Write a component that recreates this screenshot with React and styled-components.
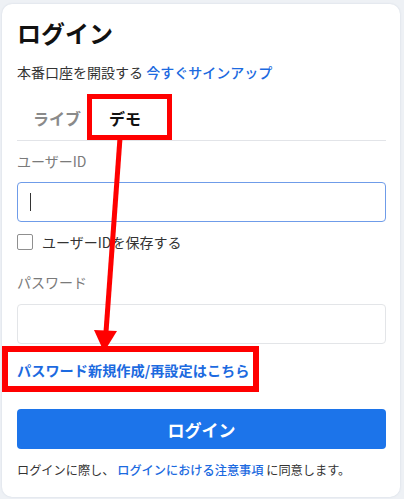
import React from "react";
import styled, { createGlobalStyle } from "styled-components";

const Global = createGlobalStyle`
  html, body { margin: 0; padding: 0; background: #eef1f5; }
  body { font-family: "Noto Sans CJK JP", "Noto Sans", sans-serif; }
  * { box-sizing: border-box; }
`;

const Page = styled.div`
  width: 404px;
  height: 499px;
  padding: 4px 4px 2px 2px;
`;

const Card = styled.div`
  position: relative;
  height: 100%;
  background: #fff;
  border-radius: 10px;
  box-shadow: 0 0 2px rgba(120, 140, 170, 0.25);
  padding: 14px 14px 0 15px;
  display: flex;
  flex-direction: column;
`;

const Title = styled.h1`
  margin: 0;
  font-size: 24px;
  line-height: 30px;
  font-weight: 700;
  color: #111;
`;

const Sub = styled.p`
  margin: 14px 0 0;
  font-size: 14px;
  line-height: 20px;
  color: #333;
`;

const Link = styled.a`
  color: #1c6ae0;
  text-decoration: none;
  font-weight: ${(p) => (p.$bold ? 700 : 500)};
`;

const Tabs = styled.div`
  margin-top: 14px;
  height: 45px;
  display: flex;
  align-items: center;
  padding-left: 2px;
  border-bottom: 1px solid #e2e4e8;
`;

const Tab = styled.div`
  padding: 0 14px;
  font-size: 16px;
  line-height: 22px;
  font-weight: 700;
  color: ${(p) => (p.$active ? "#111" : "#8a8a8a")};
`;

const Label = styled.div`
  margin-top: ${(p) => p.$mt}px;
  font-size: 14px;
  line-height: 20px;
  color: #7a7a7a;
`;

const Field = styled.div`
  margin-top: ${(p) => p.$mt}px;
  height: 40px;
  border-radius: 4px;
  border: 1px solid ${(p) => (p.$focus ? "#6f9ce9" : "#e3e5e8")};
  display: flex;
  align-items: center;
  padding-left: 12px;
`;

const Caret = styled.span`
  width: 1px;
  height: 18px;
  background: #333;
`;

const CheckRow = styled.label`
  margin-top: 10px;
  display: flex;
  align-items: center;
  gap: 9px;
  font-size: 14px;
  line-height: 20px;
  color: #333;
`;

const Box = styled.span`
  width: 16px;
  height: 16px;
  border: 1px solid #8f8f8f;
  border-radius: 2px;
  background: #fff;
`;

const ResetLink = styled.div`
  margin-top: 16px;
  font-size: 14.2px;
  line-height: 20px;
`;

const Button = styled.button`
  margin-top: 29px;
  height: 40px;
  width: 100%;
  border: none;
  border-radius: 4px;
  background: #1c74ea;
  color: #fff;
  font-family: inherit;
  font-size: 17px;
  font-weight: 700;
`;

const Footer = styled.p`
  margin: 12px 0 0;
  font-size: 12.2px;
  line-height: 18px;
  color: #333;
`;

const Overlay = styled.svg`
  position: absolute;
  left: -2px;
  top: -4px;
  pointer-events: none;
`;

export default function App() {
  return (
    <>
      <Global />
      <Page>
        <Card>
          <Title>ログイン</Title>
          <Sub>
            本番口座を開設する <Link href="#">今すぐサインアップ</Link>
          </Sub>
          <Tabs>
            <Tab>ライブ</Tab>
            <Tab $active>デモ</Tab>
          </Tabs>
          <Label $mt={10}>ユーザーID</Label>
          <Field $mt={11} $focus>
            <Caret />
          </Field>
          <CheckRow>
            <Box />
            ユーザーIDを保存する
          </CheckRow>
          <Label $mt={20}>パスワード</Label>
          <Field $mt={12} />
          <ResetLink>
            <Link $bold href="#">パスワード新規作成/再設定はこちら</Link>
          </ResetLink>
          <Button>ログイン</Button>
          <Footer>
            ログインに際し、 <Link href="#">ログインにおける注意事項</Link> に同意します。
          </Footer>
          <Overlay width="404" height="499" viewBox="0 0 404 499">
            <rect x="89.5" y="96.5" width="80" height="41" fill="none" stroke="#ff0000" strokeWidth="5" />
            <rect x="5" y="349" width="251" height="40" fill="none" stroke="#ff0000" strokeWidth="6" />
            <line x1="120" y1="138" x2="106" y2="332" stroke="#ff0000" strokeWidth="5" />
            <polygon points="94,330 117,331 104,352" fill="#ff0000" />
          </Overlay>
        </Card>
      </Page>
    </>
  );
}
